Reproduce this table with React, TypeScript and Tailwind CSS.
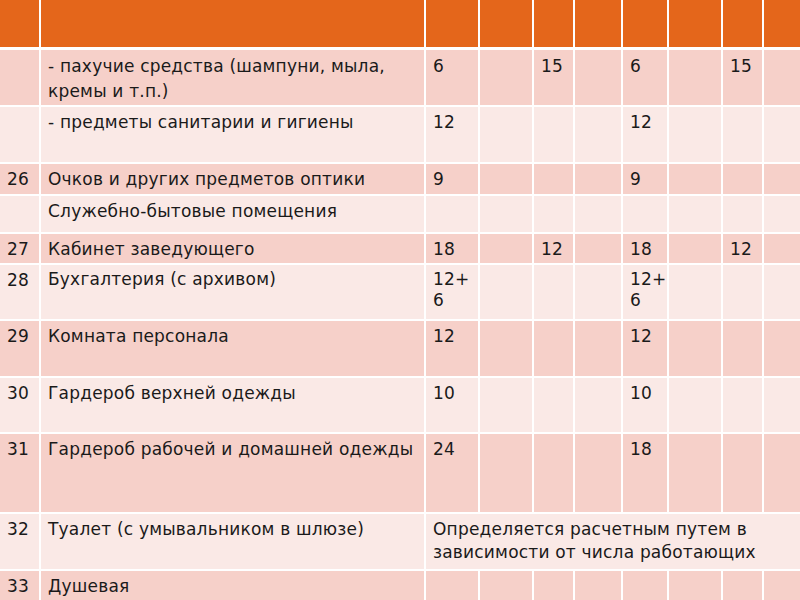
import React from 'react';

// строки таблицы: содержимое ячеек
type Row = {
  cells: string[];
  span?: string; // объединённая ячейка с 3-й колонки до конца
  lead?: string; // свой межстрочный интервал
};

const rows: Row[] = [
  { cells: ['', '- пахучие средства (шампуни, мыла, кремы и т.п.)', '6', '', '15', '', '6', '', '15', ''], lead: 'leading-[25px]' },
  { cells: ['', '- предметы санитарии и гигиены', '12', '', '', '', '12', '', '', ''] },
  { cells: ['26', 'Очков и других предметов оптики', '9', '', '', '', '9', '', '', ''] },
  { cells: ['', 'Служебно-бытовые помещения', '', '', '', '', '', '', '', ''] },
  { cells: ['27', 'Кабинет заведующего', '18', '', '12', '', '18', '', '12', ''] },
  { cells: ['28', 'Бухгалтерия (с архивом)', '12+\n6', '', '', '', '12+\n6', '', '', ''], lead: 'leading-[21px]' },
  { cells: ['29', 'Комната персонала', '12', '', '', '', '12', '', '', ''] },
  { cells: ['30', 'Гардероб верхней одежды', '10', '', '', '', '10', '', '', ''] },
  { cells: ['31', 'Гардероб рабочей и домашней одежды', '24', '', '', '', '18', '', '', ''] },
  { cells: ['32', 'Туалет (с умывальником в шлюзе)'], span: 'Определяется расчетным путем в зависимости от числа работающих' },
  { cells: ['33', 'Душевая', '', '', '', '', '', '', '', ''] },
];

export default function App() {
  return (
    <div className="w-[800px] h-[600px] overflow-hidden bg-white font-['DejaVu_Sans',sans-serif] text-[17px] leading-[23px] tracking-[0.2px] text-[#1a1a1a]">
      <div className="grid gap-[2px] grid-cols-[39px_383px_52px_52px_39px_46px_44px_52px_39px_36px] grid-rows-[48px_55px_55px_30px_36px_29px_54px_55px_54px_78px_55px_40px]">
        {Array.from({ length: 10 }).map((_, i) => (
          <div key={'h' + i} className="bg-[#e4661b] mb-[1px]" />
        ))}
        {rows.map((row, r) => {
          const bg = r % 2 === 0 ? 'bg-[#f6d0c9]' : 'bg-[#fae9e6]';
          return (
            <React.Fragment key={r}>
              {row.cells.map((c, i) => (
                <div
                  key={i}
                  className={`${bg} px-[7px] pt-[4px] ${i > 1 ? 'whitespace-pre' : ''} ${row.lead && i > 0 ? row.lead : ''}`}
                >
                  {c}
                </div>
              ))}
              {row.span && (
                <div className={`${bg} col-span-8 px-[7px] pt-[4px]`}>{row.span}</div>
              )}
            </React.Fragment>
          );
        })}
      </div>
    </div>
  );
}
